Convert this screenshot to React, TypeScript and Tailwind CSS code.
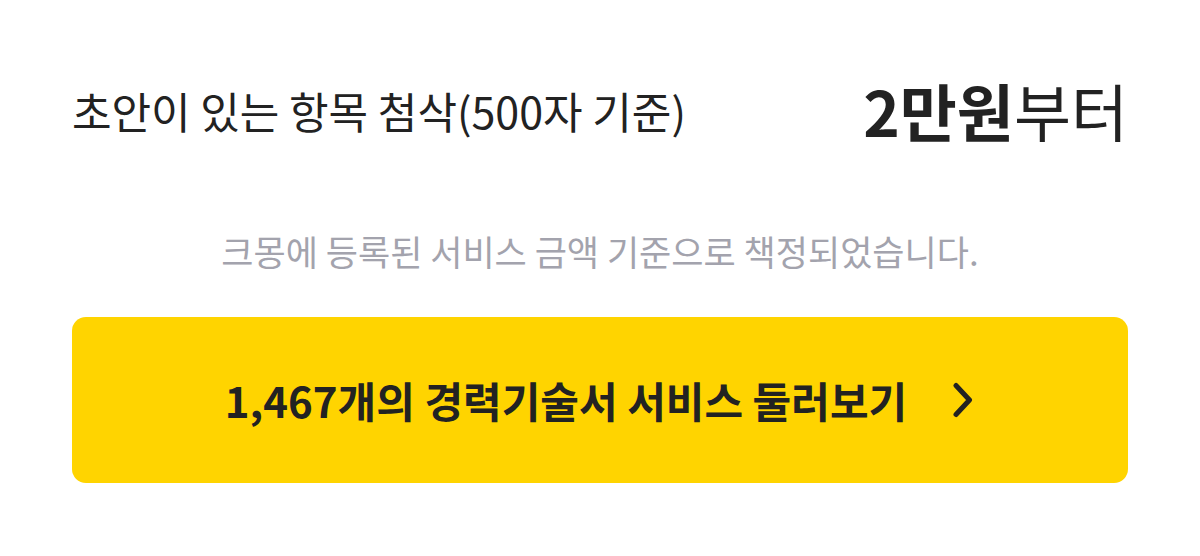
import React from "react";

export default function App() {
  return (
    <div
      className="w-[1200px] h-[556px] bg-white px-[72px] pt-[78px] text-[#222222]"
      style={{ fontFamily: '"Noto Sans CJK KR", "Noto Sans", sans-serif' }}
    >
      <div className="flex items-center justify-between h-[64px]">
        <div className="text-[43px] leading-none">초안이 있는 항목 첨삭(500자 기준)</div>
        <div className="text-[62px] leading-none">
          <span className="font-bold">2만원</span>
          <span>부터</span>
        </div>
      </div>
      <div className="mt-[91px] text-center text-[35px] leading-none text-[#a3a3ad]">
        크몽에 등록된 서비스 금액 기준으로 책정되었습니다.
      </div>
      <div className="mt-[49px] h-[166px] rounded-[14px] bg-[#ffd400] flex items-center justify-center gap-[44px]">
        <span className="text-[42px] font-bold leading-none">1,467개의 경력기술서 서비스 둘러보기</span>
        <svg width="24" height="36" viewBox="0 0 24 36" fill="none">
          <path d="M5 3.5 L18.5 18 L5 32.5" stroke="#222" strokeWidth="5" strokeLinecap="round" strokeLinejoin="round" />
        </svg>
      </div>
    </div>
  );
}
